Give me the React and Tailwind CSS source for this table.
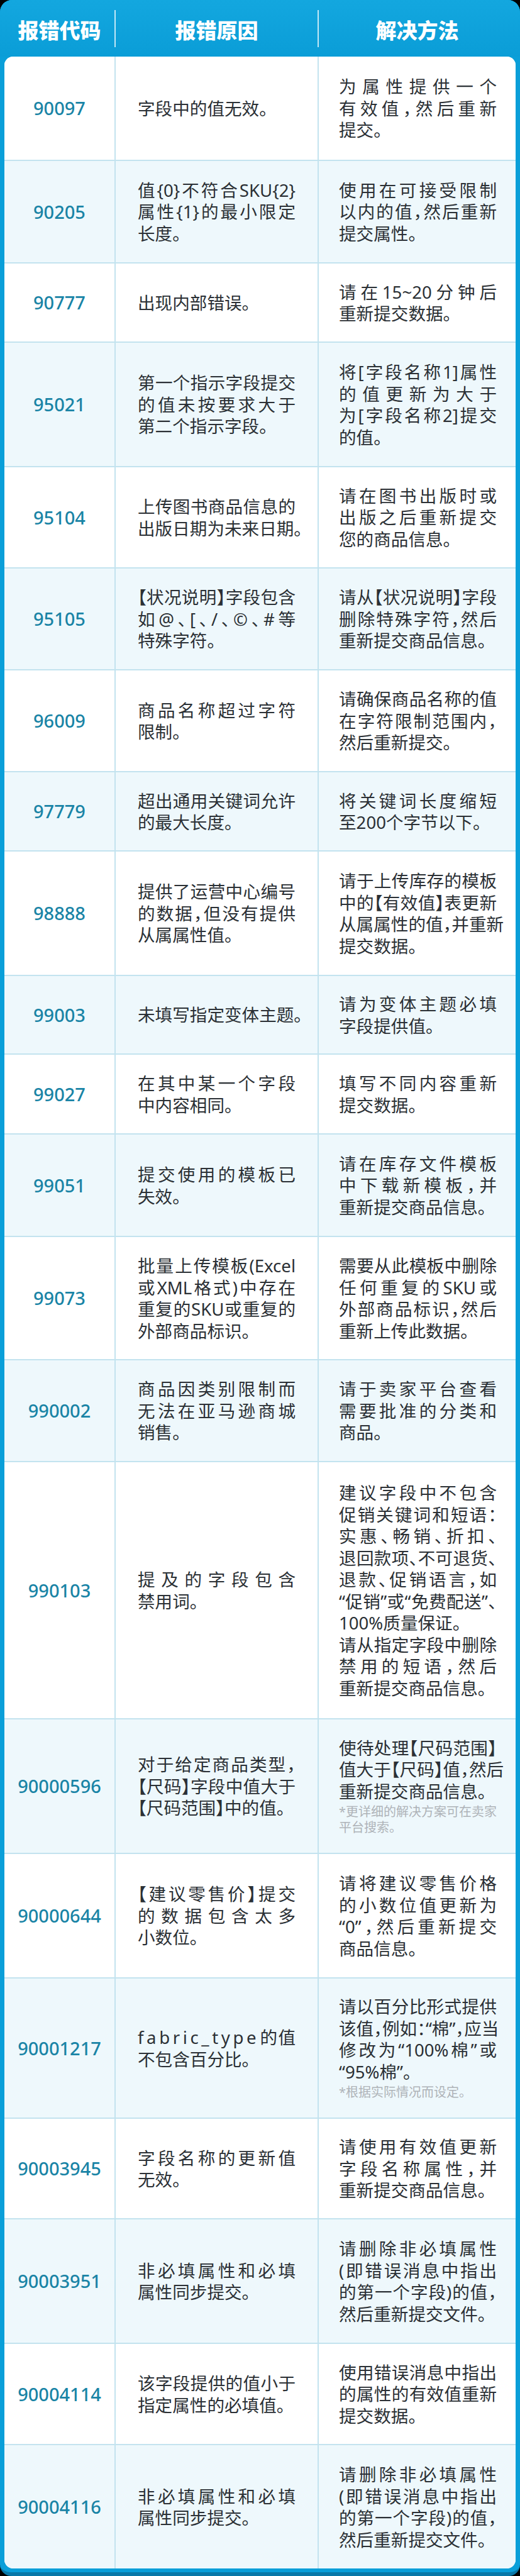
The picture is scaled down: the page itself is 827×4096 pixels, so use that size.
import clsx from "clsx";

const rows = [
  {
    code: "90097",
    h: "h-[164px]",
    reason: ["字段中的值无效。"],
    sol: ["为属性提供一个", "有效值，然后重新", "提交。"],
  },
  {
    code: "90205",
    h: "h-[163px]",
    reason: ["值{0}不符合SKU{2}", "属性{1}的最小限定", "长度。"],
    sol: ["使用在可接受限制", "以内的值，然后重新", "提交属性。"],
  },
  {
    code: "90777",
    h: "h-[126px]",
    reason: ["出现内部错误。"],
    sol: ["请在15~20分钟后", "重新提交数据。"],
  },
  {
    code: "95021",
    h: "h-[198px]",
    reason: ["第一个指示字段提交", "的值未按要求大于", "第二个指示字段。"],
    sol: ["将[字段名称1]属性", "的值更新为大于", "为[字段名称2]提交", "的值。"],
  },
  {
    code: "95104",
    h: "h-[161px]",
    reason: ["上传图书商品信息的", "出版日期为未来日期。"],
    sol: ["请在图书出版时或", "出版之后重新提交", "您的商品信息。"],
  },
  {
    code: "95105",
    h: "h-[162px]",
    reason: ["【状况说明】字段包含", "如@、[、/、©、#等", "特殊字符。"],
    sol: ["请从【状况说明】字段", "删除特殊字符，然后", "重新提交商品信息。"],
  },
  {
    code: "96009",
    h: "h-[162px]",
    reason: ["商品名称超过字符", "限制。"],
    sol: ["请确保商品名称的值", "在字符限制范围内，", "然后重新提交。"],
  },
  {
    code: "97779",
    h: "h-[126px]",
    reason: ["超出通用关键词允许", "的最大长度。"],
    sol: ["将关键词长度缩短", "至200个字节以下。"],
  },
  {
    code: "98888",
    h: "h-[198px]",
    reason: ["提供了运营中心编号", "的数据，但没有提供", "从属属性值。"],
    sol: ["请于上传库存的模板", "中的【有效值】表更新", "从属属性的值，并重新", "提交数据。"],
  },
  {
    code: "99003",
    h: "h-[125px]",
    reason: ["未填写指定变体主题。"],
    sol: ["请为变体主题必填", "字段提供值。"],
  },
  {
    code: "99027",
    h: "h-[127px]",
    reason: ["在其中某一个字段", "中内容相同。"],
    sol: ["填写不同内容重新", "提交数据。"],
  },
  {
    code: "99051",
    h: "h-[163px]",
    reason: ["提交使用的模板已", "失效。"],
    sol: ["请在库存文件模板", "中下载新模板，并", "重新提交商品信息。"],
  },
  {
    code: "99073",
    h: "h-[196px]",
    reason: ["批量上传模板(Excel", "或XML格式)中存在", "重复的SKU或重复的", "外部商品标识。"],
    sol: ["需要从此模板中删除", "任何重复的SKU或", "外部商品标识，然后", "重新上传此数据。"],
  },
  {
    code: "990002",
    h: "h-[162px]",
    reason: ["商品因类别限制而", "无法在亚马逊商城", "销售。"],
    sol: ["请于卖家平台查看", "需要批准的分类和", "商品。"],
  },
  {
    code: "990103",
    h: "h-[409px]",
    reason: ["提及的字段包含", "禁用词。"],
    sol: [
      "建议字段中不包含",
      "促销关键词和短语：",
      "实惠、畅销、折扣、",
      "退回款项、不可退货、",
      "退款、促销语言，如",
      "“促销”或“免费配送”、",
      "100%质量保证。",
    ],
    sol2: ["请从指定字段中删除", "禁用的短语，然后", "重新提交商品信息。"],
  },
  {
    code: "90000596",
    h: "h-[214px]",
    reason: ["对于给定商品类型，", "【尺码】字段中值大于", "【尺码范围】中的值。"],
    sol: ["使待处理【尺码范围】", "值大于【尺码】值，然后", "重新提交商品信息。"],
    note: ["*更详细的解决方案可在卖家", "平台搜索。"],
  },
  {
    code: "90000644",
    h: "h-[198px]",
    reason: ["【建议零售价】提交", "的数据包含太多", "小数位。"],
    sol: ["请将建议零售价格", "的小数位值更新为", "“0”，然后重新提交", "商品信息。"],
  },
  {
    code: "90001217",
    h: "h-[223px]",
    reason: [
      <>
        <span className="tracking-[4.6px]">fabric_type</span>的值
      </>,
      "不包含百分比。",
    ],
    sol: ["请以百分比形式提供", "该值，例如：“棉”，应当", "修改为“100%棉”或", "“95%棉”。"],
    note: ["*根据实际情况而设定。"],
  },
  {
    code: "90003945",
    h: "h-[160px]",
    reason: ["字段名称的更新值", "无效。"],
    sol: ["请使用有效值更新", "字段名称属性，并", "重新提交商品信息。"],
  },
  {
    code: "90003951",
    h: "h-[198px]",
    reason: ["非必填属性和必填", "属性同步提交。"],
    sol: ["请删除非必填属性", "(即错误消息中指出", "的第一个字段)的值，", "然后重新提交文件。"],
  },
  {
    code: "90004114",
    h: "h-[161px]",
    reason: ["该字段提供的值小于", "指定属性的必填值。"],
    sol: ["使用错误消息中指出", "的属性的有效值重新", "提交数据。"],
  },
  {
    code: "90004116",
    h: "h-[198px]",
    reason: ["非必填属性和必填", "属性同步提交。"],
    sol: ["请删除非必填属性", "(即错误消息中指出", "的第一个字段)的值，", "然后重新提交文件。"],
  },
];

// 每段最后一行左对齐，其余两端对齐
function Lines({ lines }) {
  return lines.map((t, i) => (
    <div
      key={i}
      className={clsx(
        "whitespace-nowrap",
        i < lines.length - 1 ? "text-justify [text-align-last:justify]" : "text-left"
      )}
    >
      {t}
    </div>
  ));
}

export default function App() {
  return (
    <div className="w-[827px] bg-black font-['Noto_Sans','Noto_Sans_CJK_SC',sans-serif]">
      <div className="overflow-hidden rounded-t-[19px] rounded-b-[18px] border-b-[6px] border-[#0a78a8] bg-[#0a9fd9]">
        {/* 表头 */}
        <div className="h-[90px] bg-linear-to-b from-[#13a7df] to-[#0a9dd7] px-[7px] pt-[16px]">
          <div className="grid h-[59px] grid-cols-[175px_323px_1fr] font-['Noto_Sans_CJK_SC',sans-serif] text-[33px] font-black text-white">
            <div className="flex items-center justify-center pt-[4px]">报错代码</div>
            <div className="flex items-center justify-center border-l-2 border-white/75 pt-[4px]">
              报错原因
            </div>
            <div className="flex items-center justify-center border-l-2 border-white/75 pt-[4px]">
              解决方法
            </div>
          </div>
        </div>

        {/* 表格内容 */}
        <div className="mx-[7px] mb-[6px] overflow-hidden rounded-[14px] bg-white">
          {rows.map((r, i) => (
            <div
              key={r.code}
              className={clsx(
                "grid grid-cols-[175px_323px_1fr] border-[#c3e3ef]",
                r.h,
                i % 2 === 1 ? "bg-[#eef8fc]" : "bg-white",
                i > 0 && "border-t-2"
              )}
            >
              <div className="flex items-center justify-center text-[29px] font-medium text-[#1984a6]">
                {r.code}
              </div>
              <div className="flex items-center border-l-2 border-[#c3e3ef] pl-[35px]">
                <div className="w-[251px] text-[27.6px] leading-[34.5px] text-[#2b3035] [font-feature-settings:'halt']">
                  <Lines lines={r.reason} />
                </div>
              </div>
              <div className="flex items-center border-l-2 border-[#c3e3ef] pl-[32px]">
                <div className="w-[251px] text-[27.6px] leading-[34.5px] text-[#2b3035] [font-feature-settings:'halt']">
                  <Lines lines={r.sol} />
                  {r.sol2 && <Lines lines={r.sol2} />}
                  {r.note && (
                    <div className="mt-[4px] text-[20px] leading-[24.5px] text-[#aeb3b8]">
                      <Lines lines={r.note} />
                    </div>
                  )}
                </div>
              </div>
            </div>
          ))}
        </div>
      </div>
    </div>
  );
}
